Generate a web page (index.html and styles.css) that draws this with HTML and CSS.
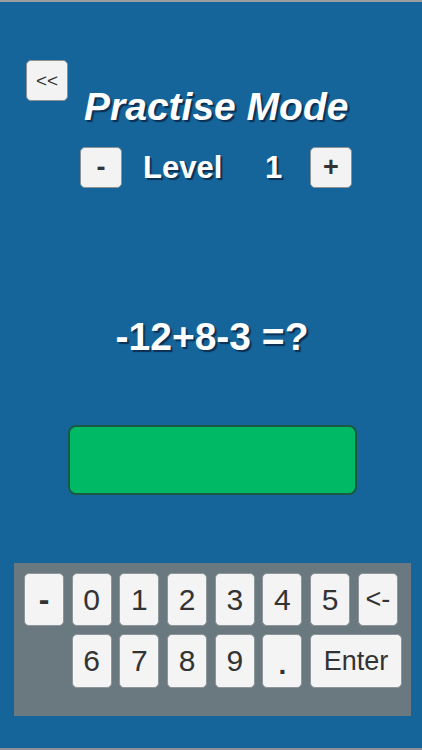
FILE: index.html
```html
<!DOCTYPE html>
<html>
<head>
<meta charset="utf-8">
<link rel="stylesheet" href="styles.css">
</head>
<body>
<div class="screen">
  <div class="header">
    <div class="btn back">&lt;&lt;</div>
    <div class="title">Practise Mode</div>
  </div>
  <div class="level-row">
    <div class="btn step">-</div>
    <div class="level-label">Level</div>
    <div class="level-num">1</div>
    <div class="btn step plus">+</div>
  </div>
  <div class="question">-12+8-3 =?</div>
  <div class="answer"></div>
  <div class="keypad">
    <div class="key minus">-</div>
    <div class="key">0</div>
    <div class="key">1</div>
    <div class="key">2</div>
    <div class="key">3</div>
    <div class="key">4</div>
    <div class="key">5</div>
    <div class="key back-key">&lt;-</div>
    <div class="key first2">6</div>
    <div class="key">7</div>
    <div class="key">8</div>
    <div class="key">9</div>
    <div class="key dot">.</div>
    <div class="key enter">Enter</div>
  </div>
</div>
</body>
</html>
```
FILE: styles.css
```css
html, body {
  margin: 0;
  padding: 0;
}
body {
  width: 422px;
  height: 750px;
  overflow: hidden;
  font-family: "Liberation Sans", Arial, sans-serif;
}
.screen {
  box-sizing: border-box;
  width: 422px;
  height: 750px;
  background: #15659a;
  border-top: 2px solid #9c9fa2;
  border-bottom: 2px solid #8e9296;
  display: flex;
  flex-direction: column;
}
.btn {
  box-sizing: border-box;
  background: #f3f3f3;
  border: 1px solid #8c9296;
  border-radius: 5px;
  color: #333;
  display: flex;
  align-items: center;
  justify-content: center;
}
.header {
  display: flex;
  align-items: flex-start;
  padding-left: 26px;
  margin-top: 58px;
}
.back {
  width: 42px;
  height: 41px;
  font-size: 19px;
}
.title {
  margin-left: 16px;
  margin-top: 26px;
  font-size: 39px;
  line-height: 42px;
  font-weight: bold;
  font-style: italic;
  color: #fff;
  text-shadow: 2px 2px 1px rgba(10, 30, 60, 0.75);
}
.level-row {
  display: flex;
  align-items: center;
  padding-left: 80px;
  margin-top: 19px;
  color: #fff;
  font-weight: bold;
  font-size: 31px;
  text-shadow: 2px 2px 1px rgba(10, 30, 60, 0.75);
}
.step {
  width: 42px;
  height: 41px;
  font-size: 27px;
  font-weight: bold;
  text-shadow: none;
}
.level-label {
  margin-left: 21px;
  width: 81px;
}
.level-num {
  margin-left: 41px;
  width: 17px;
}
.plus {
  margin-left: 28px;
}
.question {
  margin-top: 127px;
  text-align: center;
  padding-left: 2px;
  color: #fff;
  font-weight: bold;
  font-size: 39px;
  line-height: 44px;
  text-shadow: 2px 2px 1px rgba(10, 30, 60, 0.75);
}
.answer {
  box-sizing: border-box;
  width: 289px;
  height: 70px;
  margin: 66px 0 0 68px;
  background: #00b965;
  border: 2px solid #1a5a44;
  border-radius: 8px;
}
.keypad {
  box-sizing: border-box;
  width: 397px;
  height: 153px;
  margin: 68px 0 0 14px;
  background: #6a7880;
  padding: 10px 0 0 10px;
  display: grid;
  grid-template-columns: repeat(8, 40px);
  grid-template-rows: 53px 54px;
  column-gap: 7.7px;
  row-gap: 8px;
  align-content: start;
}
.key {
  box-sizing: border-box;
  background: #f4f4f4;
  border: 1px solid #8f969a;
  border-radius: 5px;
  color: #333;
  font-size: 30px;
  display: flex;
  align-items: center;
  justify-content: center;
}
.minus {
  font-size: 32px;
  font-weight: bold;
}
.back-key {
  font-size: 27px;
}
.first2 {
  grid-column: 2;
}
.dot {
  font-weight: bold;
  font-size: 28px;
  align-items: flex-end;
  padding-bottom: 6px;
}
.enter {
  grid-column: 7 / span 2;
  margin-right: -4px;
  font-size: 27px;
}
```
